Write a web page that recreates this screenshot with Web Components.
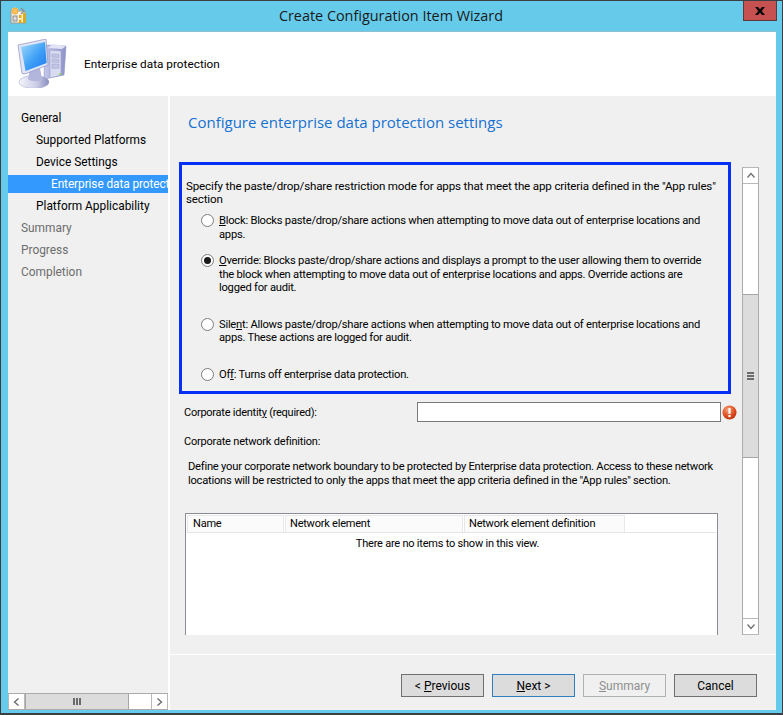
<!DOCTYPE html>
<html><head><meta charset="utf-8">
<style>
html,body{margin:0;padding:0;background:#66cbea}
body{font:11.6px/13px Roboto,"Open Sans",sans-serif;letter-spacing:-.16px;color:#000}
</style></head>
<body>
<wizard-window>
  <win-titlebar slot="title">Create Configuration Item Wizard</win-titlebar>
  <wiz-header slot="header">Enterprise data protection</wiz-header>
  <wiz-nav slot="nav">
    <nav-item level="0">General</nav-item>
    <nav-item level="1">Supported Platforms</nav-item>
    <nav-item level="1">Device Settings</nav-item>
    <nav-item level="2" selected>Enterprise data protection</nav-item>
    <nav-item level="1">Platform Applicability</nav-item>
    <nav-item level="0" muted>Summary</nav-item>
    <nav-item level="0" muted>Progress</nav-item>
    <nav-item level="0" muted>Completion</nav-item>
  </wiz-nav>
  <wiz-page slot="page" heading="Configure enterprise data protection settings">
    <mode-box>
      <p class="lead">Specify the paste/drop/share restriction mode for apps that meet the app criteria defined in the "App rules"<br>section</p>
      <radio-option top="8"><u>B</u>lock: Blocks paste/drop/share actions when attempting to move data out of enterprise locations and<br>apps.</radio-option>
      <radio-option top="13" checked><u>O</u>verride: Blocks paste/drop/share actions and displays a prompt to the user allowing them to override<br>the block when attempting to move data out of enterprise locations and apps. Override actions are<br>logged for audit.</radio-option>
      <radio-option top="23">Sile<u>n</u>t: Allows paste/drop/share actions when attempting to move data out of enterprise locations and<br>apps. These actions are logged for audit.</radio-option>
      <radio-option top="23">Of<u>f</u>: Turns off enterprise data protection.</radio-option>
    </mode-box>
    <identity-row>Corporate identit<u>y</u> (required):</identity-row>
    <network-section label="Corporate network definition:">Define your corporate network boundary to be protected by Enterprise data protection. Access to these network<br>locations will be restricted to only the apps that meet the app criteria defined in the "App rules" section.</network-section>
    <list-view></list-view>
  </wiz-page>
  <wiz-footer slot="footer">
    <wiz-button>&lt; <u>P</u>revious</wiz-button>
    <wiz-button focused><u>N</u>ext &gt;</wiz-button>
    <wiz-button disabled><u>S</u>ummary</wiz-button>
    <wiz-button>Cancel</wiz-button>
  </wiz-footer>
</wizard-window>
<script>
function def(name, css, html, init){
  customElements.define(name, class extends HTMLElement{
    constructor(){super();const r=this.attachShadow({mode:'open'});
      r.innerHTML='<style>'+css+'</style>'+(typeof html==='function'?html(this):html);}
    connectedCallback(){ if(init) init(this,this.shadowRoot); }
  });
}
def('wizard-window',`
:host{display:grid;box-sizing:border-box;width:783px;height:715px;overflow:hidden;background:#66cbea;
 border:1px solid #3a3f44;border-bottom-width:2px;
 grid-template-columns:160px 2px 606px;grid-template-rows:30px 65px 1fr;padding:0 5px 3px 7px;position:relative}
.t{grid-column:1/4;margin:0 -5px 0 -7px}
.h{grid-column:1/4}
.g{background:#fff}
.m{display:flex;flex-direction:column;min-height:0}
.nav{min-height:0}
`,`<div class="t"><slot name="title"></slot></div>
<div class="h"><slot name="header"></slot></div>
<div class="nav"><slot name="nav"></slot></div>
<div class="g"></div>
<div class="m"><slot name="page"></slot><slot name="footer"></slot></div>`);

def('win-titlebar',`
:host{display:block;height:30px;position:relative;text-align:center;font:14.4px/30px "Open Sans",sans-serif;letter-spacing:0;color:#1a1a1a}
svg.i{position:absolute;left:9px;top:6px}
.x{position:absolute;right:4px;top:0;width:34px;height:20px;box-sizing:border-box;background:#c75050;border:1px solid #5a3a3a;border-top:0;display:flex;align-items:center;justify-content:center}
`,`<svg class="i" width="17" height="17" viewBox="0 0 17 17">
 <rect x="1" y="4" width="14" height="12" fill="#f4f2ea" stroke="#9a9a90"/>
 <circle cx="5" cy="4" r="3.2" fill="#f2a93b"/><path d="M5 0v8M1 4h8M2 1l6 6M8 1L2 7" stroke="#f7c66d" stroke-width="1"/>
 <path d="M11 1l3 3-3 3" fill="none" stroke="#8d8d8d" stroke-width="1.4"/>
 <rect x="3" y="9" width="4" height="5" fill="#dcdcdc" stroke="#8c8c8c"/>
 <rect x="9" y="8" width="2.4" height="8" fill="#e8a800"/><rect x="13" y="6" width="2.6" height="10" fill="#e8a800"/>
 <rect x="9" y="11" width="2.4" height="2" fill="#fff2b0"/>
</svg><slot></slot>
<div class="x"><svg width="10" height="8" viewBox="0 0 10 8"><path d="M0 0h3l2 2.200L7 0h3L6.800 4 10 8H7L5 5.800 3 8H0l3.200-4z" fill="#0b0b0b"/></svg></div>`);

def('wiz-header',`
:host{display:flex;align-items:center;height:65px;background:#fff;box-shadow:inset 0 1px 0 #8fc0d2;padding-left:9px;gap:16px;font-size:11.8px;letter-spacing:0}
svg{flex:none}
span{margin-top:1px}
`,`<svg width="51" height="49" viewBox="0 0 51 49">
<defs>
<linearGradient id="s" x1="0" y1="0" x2="1" y2="1"><stop offset="0" stop-color="#9fdcfb"/><stop offset=".55" stop-color="#3f9ff6"/><stop offset="1" stop-color="#1e7af0"/></linearGradient>
<linearGradient id="c" x1="0" y1="0" x2="1" y2="0"><stop offset="0" stop-color="#c4c8ea"/><stop offset="1" stop-color="#8d92c8"/></linearGradient>
<linearGradient id="b" x1="0" y1="0" x2="1" y2="0"><stop offset="0" stop-color="#f4f5fb"/><stop offset=".6" stop-color="#c9cbe6"/><stop offset="1" stop-color="#8a8dbd"/></linearGradient>
</defs>
<path d="M28 6l21 1-2 29-20 4z" fill="url(#c)" stroke="#8d90bf" stroke-width=".6"/>
<path d="M36 5l13 2-4 3-14-1z" fill="#e2e4f6"/>
<path d="M33 11l11 1v24l-11 3z" fill="#d9dbf0" stroke="#9497c4" stroke-width=".5"/>
<path d="M35 15l7 .4v3l-7-.2zM35 20l7 .3v3l-7-.1zM35 25l7 .2v4l-7 .2z" fill="#c2c5e3" stroke="#9da0ca" stroke-width=".5"/>
<circle cx="43" cy="35" r="1" fill="#7fdc4a"/>
<ellipse cx="17" cy="43" rx="15" ry="6.5" fill="url(#b)" stroke="#9a9dc8" stroke-width=".5"/>
<path d="M13 30l10-1 2 11c-3 3-11 3-14 0z" fill="#b3b6dc"/>
<path d="M1 6L29 0l2 26-23 9-3-.5z" fill="#dfe4f6" stroke="#8f93bf" stroke-width=".7"/>
<path d="M4 8l24-5 1.600 21-21 8z" fill="url(#s)"/>
</svg><span><slot></slot></span>`);

def('wiz-nav',`
:host{display:flex;flex-direction:column;height:100%;background:#f0f0f0;box-sizing:border-box;padding-top:11px;overflow:hidden}
.l{flex:1;min-height:0;overflow:hidden}
.b{flex:none}
`,`<div class="l"><slot></slot></div><div class="b"><h-scroll></h-scroll></div>`);

def('nav-item',`
:host{display:block;height:22px;position:relative;white-space:nowrap;overflow:hidden;font-size:11.9px;letter-spacing:0}
:host([selected]){letter-spacing:-.1px}
.r{box-sizing:border-box;height:18px;margin-top:2px;line-height:18px}
:host([selected]) .r{background:#3399ff;color:#fff}
:host([muted]) .r{color:#6d6d6d}
`,h=>`<div class="r" style="padding-left:${13+15*(+h.getAttribute('level'))}px"><slot></slot></div>`);

def('h-scroll',`
:host{display:flex;height:17px;box-sizing:border-box;background:#fff;border:solid #ababab;border-width:1px 0}
.bt{width:17px;box-sizing:border-box;display:flex;align-items:center;justify-content:center;background:#fff;border:1px solid #b9b9b9;border-width:0 1px}
.th{width:104px;box-sizing:border-box;background:#dcdcdc;border:1px solid #a6a6a6;border-width:0 1px;display:flex;align-items:center;justify-content:center;gap:1px}
.th i{width:2px;height:7px;background:#6b6b6b}
.sp{flex:1}
`,`<div class="bt"><svg width="7" height="8" viewBox="0 0 7 8"><path d="M5.500 .5L1.500 4l4 3.500" fill="none" stroke="#6e6e6e" stroke-width="1.400"/></svg></div>
<div class="th"><i></i><i></i><i></i></div><div class="sp"></div>
<div class="bt"><svg width="7" height="8" viewBox="0 0 7 8"><path d="M1.500 .5L5.500 4l-4 3.500" fill="none" stroke="#6e6e6e" stroke-width="1.400"/></svg></div>`);

def('wiz-page',`
:host{display:flex;flex-direction:column;flex:1;min-height:0;background:#f0f0f0}
h1{margin:0;font:400 15px/20px "Open Sans",sans-serif;letter-spacing:0;color:#1570d0;padding:16px 0 0 18px;height:20px;flex:none}
.v{display:flex;margin-top:35px;height:468px;flex:none;padding-left:9px}
.c{width:560px;height:473px;margin-top:-5px;flex:none;overflow:hidden}
.s{margin-left:3px}
`,h=>`<h1>${h.getAttribute('heading')}</h1>
<div class="v"><div class="c"><slot></slot></div><div class="s"><v-scroll></v-scroll></div></div>`);

def('v-scroll',`
:host{display:flex;flex-direction:column;width:17px;height:468px;box-sizing:border-box;background:#fff;border:solid #ababab;border-width:0 1px}
.bt{height:17px;box-sizing:border-box;display:flex;align-items:center;justify-content:center;border:1px solid #b9b9b9;border-width:1px 0;flex:none}
.sp{height:110px}
.th{height:164px;box-sizing:border-box;background:#dcdcdc;border:solid #a6a6a6;border-width:1px 0;display:flex;flex-direction:column;align-items:center;justify-content:center;gap:1px}
.th i{width:7px;height:2px;background:#6b6b6b}
`,`<div class="bt"><svg width="8" height="7" viewBox="0 0 8 7"><path d="M.5 5.500L4 1.500l3.500 4" fill="none" stroke="#6e6e6e" stroke-width="1.300"/></svg></div>
<div class="sp"></div><div class="th"><i></i><i></i><i></i></div><div class="sp" style="flex:1"></div>
<div class="bt"><svg width="8" height="7" viewBox="0 0 8 7"><path d="M.5 1.500L4 5.500l3.500-4" fill="none" stroke="#6e6e6e" stroke-width="1.300"/></svg></div>`);

def('mode-box',`
:host{display:block;box-sizing:border-box;width:552px;height:232px;border:3px solid #0630f8;padding:15px 4px 0 4px}
::slotted(p){margin:0;white-space:nowrap}
`,`<slot></slot>`);

def('radio-option',`
:host{display:flex;padding-left:15px;gap:5px;box-sizing:border-box;font-size:11.2px;letter-spacing:-.24px}
.d{flex:none;width:13px;height:13px;box-sizing:border-box;border:1px solid #7c7c7c;border-radius:50%;background:#fff;display:flex;align-items:center;justify-content:center}
.d i{width:7px;height:7px;border-radius:50%;background:#1a1a1a;display:none}
:host([checked]) .d i{display:block}
.t{flex:1;line-height:13.500px;white-space:nowrap}
`,h=>`<div class="d"><i></i></div><div class="t"><slot></slot></div>`,
(h)=>{h.style.marginTop=h.getAttribute('top')+'px'});

def('identity-row',`
:host{display:flex;align-items:center;height:20px;margin-top:8px;padding-left:5px;font-size:11px;letter-spacing:-.25px}
.l{width:233px;flex:none}
.in{width:304px;height:20px;box-sizing:border-box;background:#fff;border:1px solid #7a7a7a;flex:none}
svg{margin-left:1px;flex:none}
`,`<div class="l"><slot></slot></div><div class="in"></div>
<svg width="15" height="15" viewBox="0 0 15 15"><defs><radialGradient id="e" cx=".4" cy=".3" r=".8"><stop offset="0" stop-color="#f5a27a"/><stop offset=".6" stop-color="#dd4a1c"/><stop offset="1" stop-color="#b22a0c"/></radialGradient></defs><circle cx="7.500" cy="7.500" r="7" fill="url(#e)"/><rect x="6.400" y="3" width="2.200" height="5.800" fill="#fff"/><rect x="6.400" y="10" width="2.200" height="2.200" fill="#fff"/></svg>`);

def('network-section',`
:host{display:block}
.l{margin-top:13px;padding-left:5px;height:13px;font-size:11px;letter-spacing:-.2px}
.p{margin-top:12px;padding-left:9px;line-height:14px;white-space:nowrap;font-size:11.2px;letter-spacing:-.24px}
`,h=>`<div class="l">${h.getAttribute('label')}</div><div class="p"><slot></slot></div>`);

def('list-view',`
:host{display:block;box-sizing:border-box;margin:25px 0 0 6px;width:533px;height:130px;background:#fff;border:1px solid #8b8b95;padding:1px 1px 0 1px;font-size:11px;letter-spacing:-.22px}
.h{display:flex;height:17px;border-bottom:1px solid #e5e5e5;box-sizing:content-box;gap:1px;background:#fff}
.h div{background:#fbfbfb;padding-left:4px;box-sizing:border-box;line-height:15px;border:1px solid #e8e8e8;border-bottom:0}
.h div:first-child{padding-left:5px}
.e{text-align:center;line-height:13px;margin-top:4px;padding-right:8px}
`,`<div class="h"><div style="width:97px">Name</div><div style="width:178px">Network element</div><div style="width:161px">Network element definition</div></div>
<div class="e">There are no items to show in this view.</div>`);

def('wiz-footer',`
:host{display:flex;justify-content:flex-end;gap:8px;height:56px;box-sizing:border-box;border-top:1px solid #fff;background:#f0f0f0;padding:19px 19px 0 0}
`,`<slot></slot>`);

def('wiz-button',`
:host{display:flex;align-items:center;justify-content:center;width:83px;height:23px;box-sizing:border-box;background:#dcdcdc;border:1px solid #707070;font-size:12px;letter-spacing:0;padding-top:1px}
:host([focused]){border-color:#2f7fc0}
:host([disabled]){background:#f0f0f0;border-color:#adb2b5;color:#8f8f8f}
`,`<span><slot></slot></span>`);
</script>
</body></html>
